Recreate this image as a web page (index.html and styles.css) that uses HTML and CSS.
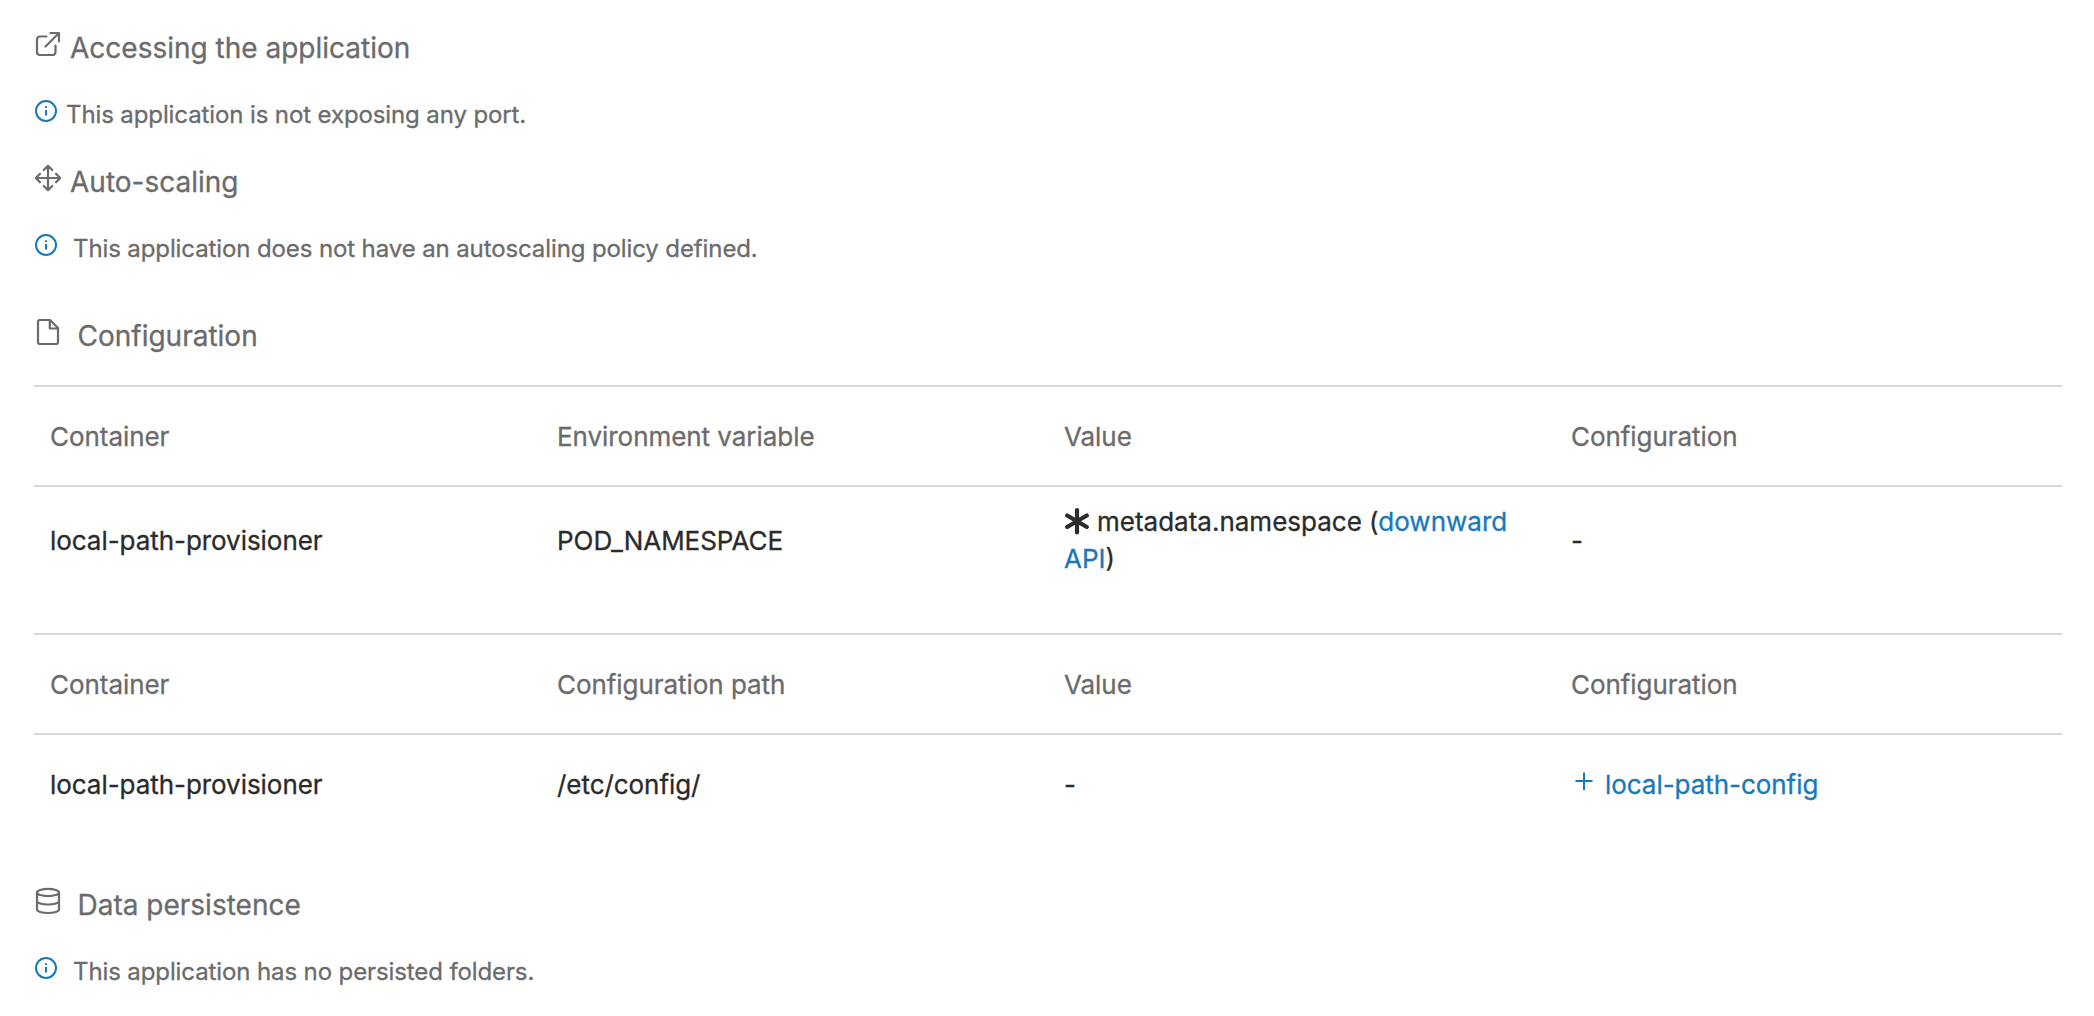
FILE: index.html
```html
<!DOCTYPE html>
<html lang="en">
<head>
<meta charset="utf-8">
<title>Application details</title>
<link rel="stylesheet" href="styles.css">
</head>
<body>
<svg width="0" height="0" class="sprite">
  <symbol id="info" viewBox="0 0 24 24">
    <circle cx="12" cy="12" r="10" fill="none" stroke="currentColor" stroke-width="2"/>
    <path d="M12 11v5.500M12 7.200v1.900" fill="none" stroke="currentColor" stroke-width="2"/>
  </symbol>
</svg>
<main class="details">
  <section class="section">
    <h2 class="title"><svg class="icon" viewBox="0 0 28 28"><path d="M12.500 6.500H6a3 3 0 0 0-3 3V22a3 3 0 0 0 3 3h12.500a3 3 0 0 0 3-3v-6.500M11.500 16.500 25 3M16.500 3H25v8.500"/></svg>Accessing the application</h2>
    <p class="note"><svg class="note-icon"><use href="#info"/></svg>This application is not exposing any port.</p>
  </section>
  <section class="section">
    <h2 class="title"><svg class="icon" viewBox="0 0 28 28"><path d="M14 2v24M2 14h24M9.700 6 14 1.800 18.300 6M9.700 22l4.300 4.200 4.300-4.200M6 9.700 1.800 14 6 18.300M22 9.700l4.200 4.300-4.200 4.300"/></svg>Auto-scaling</h2>
    <p class="note spaced"><svg class="note-icon"><use href="#info"/></svg>This application does not have an autoscaling policy defined.</p>
  </section>
  <section class="section separated">
    <h2 class="title spaced"><svg class="icon" viewBox="0 0 28 28"><path d="M16 2H6a2 2 0 0 0-2 2v20a2 2 0 0 0 2 2h16a2 2 0 0 0 2-2V10zM15.800 2v8.500H24"/></svg>Configuration</h2>
    <div class="tables">
      <table class="table">
        <thead><tr><th>Container</th><th>Environment variable</th><th>Value</th><th>Configuration</th></tr></thead>
        <tbody><tr>
          <td>local-path-provisioner</td><td>POD_NAMESPACE</td>
          <td class="reference"><svg class="asterisk" viewBox="0 0 26 28"><path d="M13 3v22.500M3.200 8.500l19.600 11.500M22.800 8.500l-19.600 11.500"/></svg>metadata.namespace (<a href="#">downward API</a>)</td>
          <td>-</td>
        </tr></tbody>
      </table>
      <table class="table">
        <thead><tr><th>Container</th><th>Configuration path</th><th>Value</th><th>Configuration</th></tr></thead>
        <tbody><tr>
          <td>local-path-provisioner</td><td>/etc/config/</td><td>-</td>
          <td><a href="#"><svg class="plus" viewBox="0 0 26 26"><path d="M13 4.500v17.500M4.500 13h17"/></svg>local-path-config</a></td>
        </tr></tbody>
      </table>
    </div>
  </section>
  <section class="section separated">
    <h2 class="title spaced"><svg class="icon" viewBox="0 0 28 28"><ellipse cx="14" cy="5.500" rx="11" ry="3.600"/><path d="M3 5.500v17C3 24.500 8 26 14 26s11-1.500 11-3.500v-17M3 14c0 2 5 3.500 11 3.500S25 16 25 14"/></svg>Data persistence</h2>
    <p class="note spaced"><svg class="note-icon"><use href="#info"/></svg>This application has no persisted folders.</p>
  </section>
</main>
</body>
</html>
```
FILE: styles.css
```css
* { box-sizing: border-box; }

body {
  margin: 0;
  background: #fff;
  color: #2b2b2b;
  font: 400 26px/37px Inter, "Liberation Sans", sans-serif;
  -webkit-text-stroke: 0.3px currentColor;
}

.sprite { position: absolute; }

.details { padding: 28px 32px 0 34px; }

.section { margin-bottom: 29px; }
.section.separated { margin-top: 49px; }
.section.separated + .section.separated { margin-top: 51px; }

.title {
  display: flex;
  gap: 8px;
  margin: 0 0 29px;
  color: #6b6b6b;
  font-size: 28px;
  font-weight: 400;
  line-height: 40px;
}
.title.spaced { gap: 15.5px; }

.icon {
  width: 28px;
  height: 28px;
  margin-top: 2px;
  fill: none;
  stroke: currentColor;
  stroke-width: 2.2;
  stroke-linecap: round;
  stroke-linejoin: round;
}

.note {
  display: flex;
  gap: 8px;
  margin: 0;
  color: #6b6b6b;
  font-size: 24px;
  line-height: 36px;
  letter-spacing: -0.11px;
}
.note.spaced { gap: 15px; }

.note-icon {
  width: 24px;
  height: 24px;
  margin-top: 2px;
  color: #1779ba;
}

.tables {
  display: flex;
  flex-direction: column;
  gap: 40px;
}

.table {
  width: 100%;
  table-layout: fixed;
  border-collapse: separate;
  border-spacing: 0;
}
.table th,
.table td {
  height: 99px;
  padding: 16px;
  text-align: left;
  vertical-align: middle;
  font-weight: 400;
  letter-spacing: -0.05px;
}
.table th {
  height: 102px;
  border: solid #d8d8d8;
  border-width: 2px 0;
  color: #6b6b6b;
}
.table .reference { letter-spacing: 0; }

a {
  color: #1779ba;
  text-decoration: none;
}

.asterisk,
.plus {
  fill: none;
  stroke: currentColor;
}
.asterisk {
  width: 26px;
  height: 28px;
  margin-right: 7px;
  vertical-align: -4px;
  stroke-width: 4.2;
  stroke-linecap: round;
}
.plus {
  width: 26px;
  height: 26px;
  margin-right: 8px;
  vertical-align: 0;
  stroke-width: 2;
}
```
